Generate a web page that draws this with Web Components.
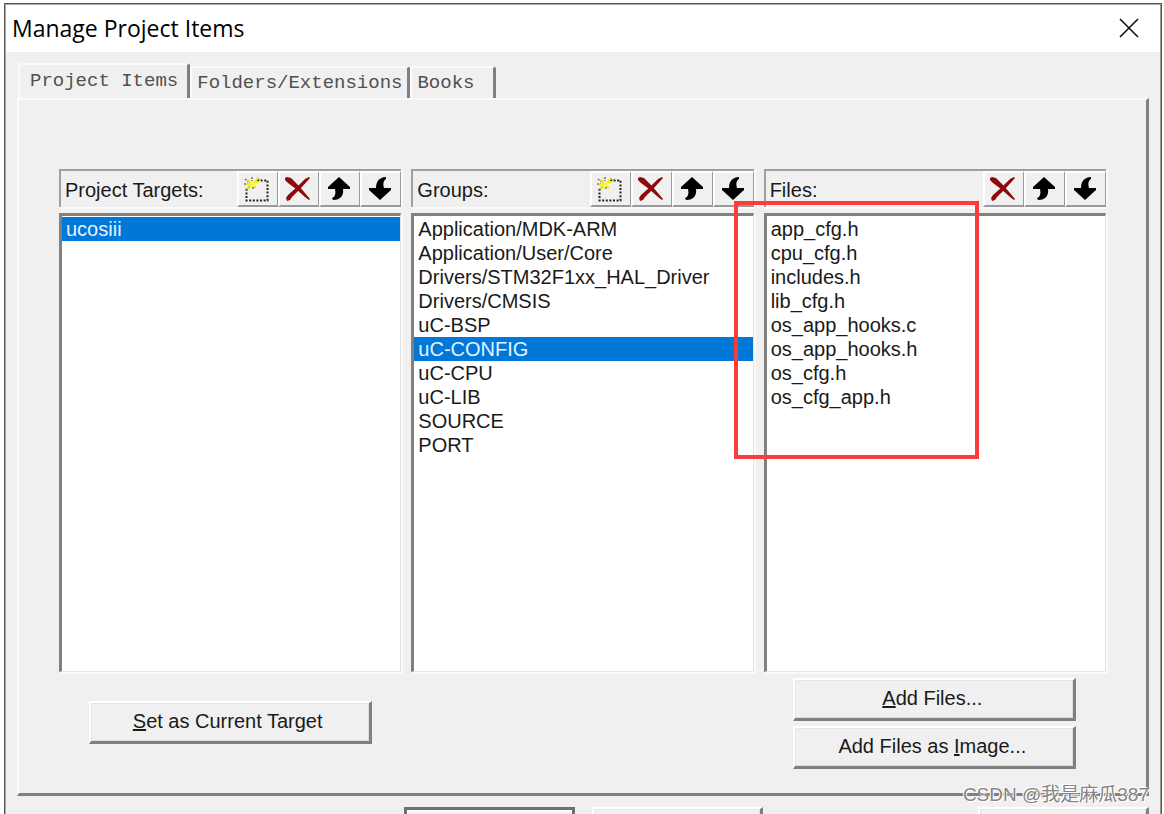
<!DOCTYPE html>
<html lang="en">
<head>
<meta charset="utf-8">
<title>Manage Project Items</title>
<style>
html, body { height: 100%; }
body { margin: 0; background: #fff; overflow: hidden; font: 20px/24px "Liberation Sans", Arial, sans-serif; color: #1a1a1a; }
</style>
</head>
<body>
<pm-app></pm-app>
<script>
const define = (name, html, setup) => {
  const template = document.createElement('template');
  template.innerHTML = html;
  customElements.define(name, class extends HTMLElement {
    constructor() {
      super();
      this.attachShadow({ mode: 'open' }).append(template.content.cloneNode(true));
    }
    connectedCallback() { if (setup) setup(this, this.shadowRoot); }
  });
};

const ICONS = {
  new: ['New', `<path d="M13 4.500H23.500V24.500H2.500V13" fill="none" stroke="#222" stroke-width="2" stroke-dasharray="2 1.6"/>
    <path d="M1 3l4 3M8 1v4M0 8h4M2 14l4-4M9 11v3M13 2l3 2" stroke="#77775c" stroke-width="1.5" stroke-dasharray="2 1"/>
    <path d="M4 4l3 3M14 2l-4 5M15 6h-5M7 8l-5 1M9 9l3 3M7 10l-3 3" stroke="#f4f000" stroke-width="2"/>
    <circle cx="9" cy="8" r="2" fill="#fbf84a"/>`],
  delete: ['Delete', `<path fill="#8b0a0a" d="M0 2 2 1 6 2 14 10 25 23 24 24 20 21 11 13 3 7 0 4ZM24 1 25 2 16 12 7 21 5 24 2 25 1 22 3 19 12 11 20 3Z"/>`],
  up: ['Move up', `<path d="M13 1 24 11V13H17C18 19 15 24 7 24L6 22C9 21 10 18 9 13H2V11Z"/>`],
  down: ['Move down', `<path d="M19 1V3C16 5 16 8 17 12H24V14L13 24 2 14V12H9C9 6 12 1 19 1Z"/>`]
};

define('pm-tool', `
<style>
:host { display: block; width: 41px; height: 36px; }
button { display: grid; place-items: center; box-sizing: border-box; width: 100%; height: 100%; margin: 0; padding: 0 2px 0 0; background: #f0f0f0; border: 2px solid #fff; border-right-color: #999; border-bottom-color: #999; border-right-width: 1px; }
svg { display: block; width: 26px; height: 26px; }
</style>
<button type="button"><svg viewBox="0 0 26 26" aria-hidden="true"></svg></button>`,
(el, root) => {
  const [label, art] = ICONS[el.getAttribute('icon')];
  root.querySelector('button').setAttribute('aria-label', label);
  root.querySelector('svg').innerHTML = art;
});

define('pm-button', `
<style>
:host { display: block; width: 283px; height: 43px; }
button { box-sizing: border-box; width: 100%; height: 100%; margin: 0; padding: 0 8px 3px 4px; font: inherit; color: inherit; background: #f0f0f0; border: 2px solid #fff; border-right: 3px solid #808080; border-bottom: 3px solid #808080; box-shadow: inset 1px 1px #e5e5e5, inset -1px -1px #ddd; }
:host([default]) button { border: 3px solid #707070; box-shadow: inset 2px 2px #fff; }
</style>
<button type="button"><slot></slot></button>`,
(el, root) => {
  if (el.hasAttribute('label')) root.querySelector('button').setAttribute('aria-label', el.getAttribute('label'));
});

define('pm-item', `
<style>
:host { display: block; height: 24px; padding: 0 4px; white-space: nowrap; }
:host([aria-selected="true"]) { background: #0078d7; color: #e6f2ff; }
</style>
<slot></slot>`, el => el.setAttribute('role', 'option'));

define('pm-column', `
<style>
:host { display: flex; flex-direction: column; position: relative; min-width: 0; }
header { display: flex; align-items: center; box-sizing: border-box; height: 38px; margin-bottom: 6px; border: 2px solid #a0a0a0; border-right: 0; border-bottom: 0; box-shadow: 0 2px #fafafa, 2px 0 #fafafa; }
h2 { flex: 1; margin: 0; padding: 2px 0 0 4px; font: inherit; }
.tools { display: flex; }
.list { box-sizing: border-box; height: calc(19 * 24px + 3px); padding-top: 1px; background: #fff; border: 3px solid #808080; border-right: 1px solid #e3e3e3; border-bottom: 1px solid #e3e3e3; box-shadow: 2px 2px #fafafa; }
.actions { display: flex; flex-direction: column; align-items: center; gap: 5px; padding-top: 6px; }
:host([single]) .actions { padding-top: 29px; }
</style>
<header><h2 id="title"></h2><div class="tools"><slot name="tools"></slot></div></header>
<div class="list" role="listbox" aria-labelledby="title"><slot></slot></div>
<div class="actions"><slot name="actions"></slot></div>
<slot name="mark"></slot>`,
(el, root) => { root.querySelector('h2').textContent = el.getAttribute('heading'); });

define('pm-highlight', `
<style>
:host { position: absolute; top: 32px; left: -30px; box-sizing: border-box; width: 245px; height: 258px; border: 4px solid #fb3c3c; pointer-events: none; }
</style>`);

define('pm-tab', `
<style>
:host { display: block; }
button { box-sizing: border-box; min-width: 86px; height: 32px; margin: 0; padding: 0 5px; font: 19px/24px "Liberation Mono", "Courier New", monospace; color: #505050; text-align: left; background: #f0f0f0; border: 2px solid #fafafa; border-bottom: 0; border-right: 3px solid #808080; border-radius: 3px 3px 0 0; white-space: nowrap; }
button[aria-selected="true"] { height: 35px; padding: 0 9px 2px 10px; }
</style>
<button type="button" role="tab"><slot></slot></button>`,
(el, root) => root.querySelector('button').setAttribute('aria-selected', el.hasAttribute('selected')));

define('pm-app', `
<style>
:host { display: block; position: relative; box-sizing: border-box; height: 100vh; padding: 3px 2px 0 4px; overflow: hidden; }
.window { box-sizing: border-box; min-height: 100%; border: 1px solid #555; border-bottom: 0; background: #f0f0f0; box-shadow: inset 1px 1px #aaa, inset -1px 0 #999; }
.titlebar { display: flex; align-items: center; justify-content: space-between; box-sizing: border-box; height: 47px; margin: 1px 1px 0; padding: 0 20px 2px 6px; background: #fff; }
h1 { margin: 0; font: 23px/32px "Open Sans", "Segoe UI", sans-serif; color: #000; }
.close { display: grid; place-items: center; width: 22px; height: 22px; margin: 0; padding: 0; border: 0; background: none; }
.tabs { display: flex; align-items: flex-end; margin: 11px 12px 0 13px; }
.panel { margin: 0 12px; padding: 69px 40px 24px; border: 2px solid #fafafa; border-right: 3px solid #808080; border-bottom: 3px solid #808080; }
.columns { display: grid; grid-template-columns: repeat(3, minmax(0, 1fr)); gap: 10px; }
.footer { display: grid; grid-template-columns: 1fr auto 1fr; margin: 11px 12px 0; }
.center { display: flex; gap: 17px; grid-column: 2; }
.footer pm-button { width: 171px; }
.help { justify-self: end; }
.watermark { position: absolute; right: 15px; bottom: 7px; font: 19px/24px "Liberation Sans", "Noto Sans CJK SC", sans-serif; color: #858585; text-shadow: 1px 1px #fff, -1px -1px #fff; }
</style>
<main class="window">
  <div class="titlebar">
    <h1>Manage Project Items</h1>
    <button class="close" type="button" aria-label="Close"><svg width="20" height="20" viewBox="0 0 20 20"><path d="M1 1 19 19M19 1 1 19" stroke="#111" stroke-width="1.6"/></svg></button>
  </div>
  <div class="tabs" role="tablist">
    <pm-tab selected>Project Items</pm-tab>
    <pm-tab>Folders/Extensions</pm-tab>
    <pm-tab>Books</pm-tab>
  </div>
  <section class="panel" role="tabpanel" aria-label="Project Items">
    <div class="columns">
      <pm-column heading="Project Targets:" single>
        <pm-tool slot="tools" icon="new"></pm-tool><pm-tool slot="tools" icon="delete"></pm-tool><pm-tool slot="tools" icon="up"></pm-tool><pm-tool slot="tools" icon="down"></pm-tool>
        <pm-item aria-selected="true">ucosiii</pm-item>
        <pm-button slot="actions"><u>S</u>et as Current Target</pm-button>
      </pm-column>
      <pm-column heading="Groups:">
        <pm-tool slot="tools" icon="new"></pm-tool><pm-tool slot="tools" icon="delete"></pm-tool><pm-tool slot="tools" icon="up"></pm-tool><pm-tool slot="tools" icon="down"></pm-tool>
        <pm-item>Application/MDK-ARM</pm-item>
        <pm-item>Application/User/Core</pm-item>
        <pm-item>Drivers/STM32F1xx_HAL_Driver</pm-item>
        <pm-item>Drivers/CMSIS</pm-item>
        <pm-item>uC-BSP</pm-item>
        <pm-item aria-selected="true">uC-CONFIG</pm-item>
        <pm-item>uC-CPU</pm-item>
        <pm-item>uC-LIB</pm-item>
        <pm-item>SOURCE</pm-item>
        <pm-item>PORT</pm-item>
      </pm-column>
      <pm-column heading="Files:">
        <pm-tool slot="tools" icon="delete"></pm-tool><pm-tool slot="tools" icon="up"></pm-tool><pm-tool slot="tools" icon="down"></pm-tool>
        <pm-item>app_cfg.h</pm-item>
        <pm-item>cpu_cfg.h</pm-item>
        <pm-item>includes.h</pm-item>
        <pm-item>lib_cfg.h</pm-item>
        <pm-item>os_app_hooks.c</pm-item>
        <pm-item>os_app_hooks.h</pm-item>
        <pm-item>os_cfg.h</pm-item>
        <pm-item>os_cfg_app.h</pm-item>
        <pm-button slot="actions"><u>A</u>dd Files...</pm-button>
        <pm-button slot="actions">Add Files as <u>I</u>mage...</pm-button>
        <pm-highlight slot="mark"></pm-highlight>
      </pm-column>
    </div>
  </section>
  <div class="footer">
    <div class="center">
      <pm-button default label="OK"></pm-button>
      <pm-button label="Cancel"></pm-button>
    </div>
    <pm-button class="help" label="Help"></pm-button>
  </div>
</main>
<div class="watermark">CSDN @我是麻瓜387</div>`);
</script>
</body>
</html>
